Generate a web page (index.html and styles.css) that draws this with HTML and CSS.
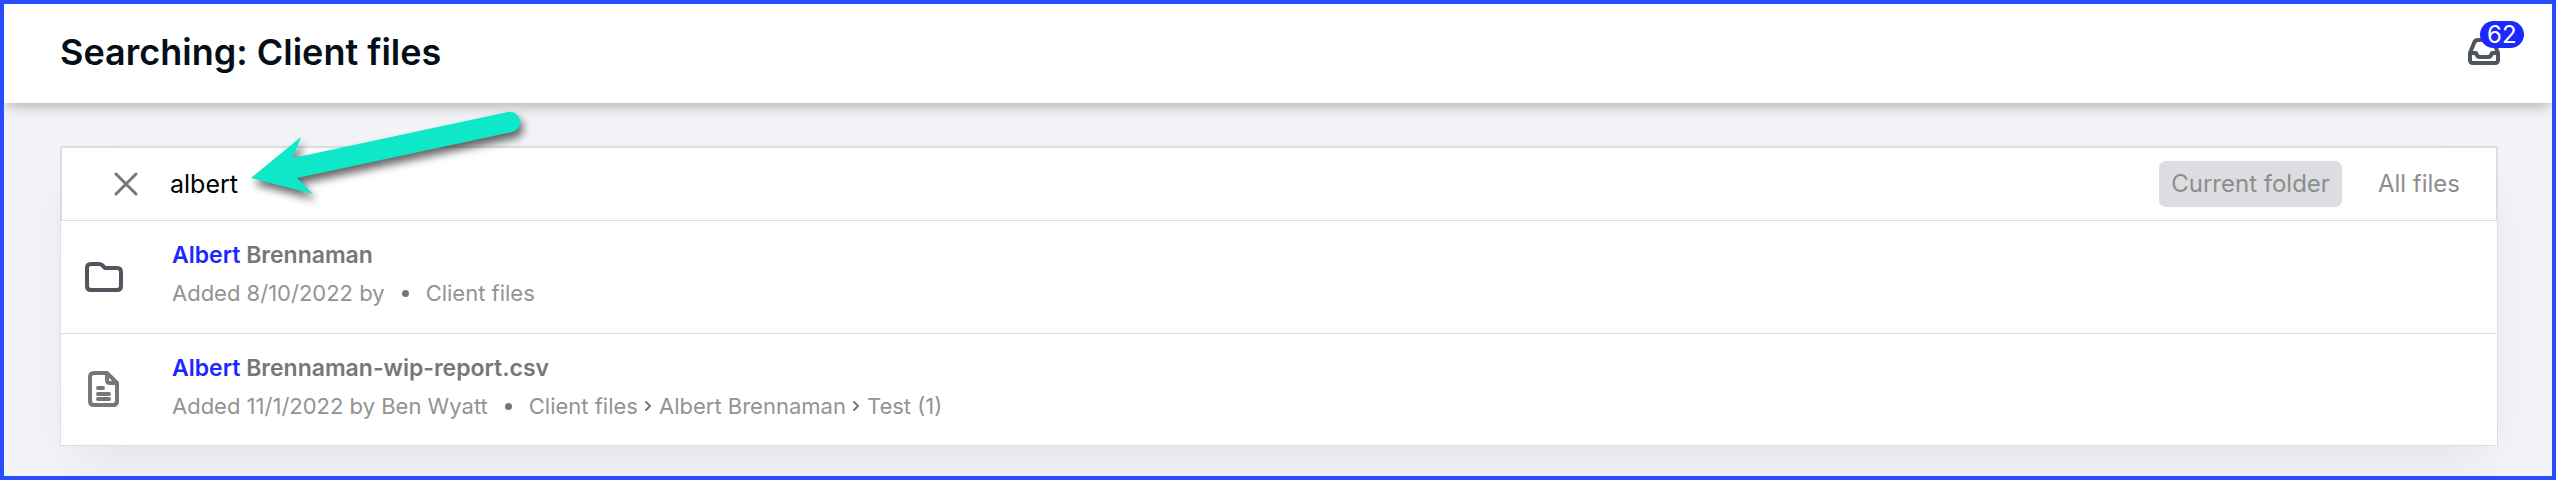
FILE: index.html
```
<!DOCTYPE html>
<html lang="en">
<head>
    <meta charset="UTF-8">
    <meta name="viewport" content="width=device-width, initial-scale=1.0">
    <title>Searching: Client files</title>
    <link rel="stylesheet" href="styles.css">
</head>
<body>
    <header class="header">
        <h1>Searching: Client files</h1>
        <button class="inbox" type="button" aria-label="Inbox, 62 unread">
            <svg width="34" height="28" viewBox="0 0 34 28">
                <path d="M3 15 L7 5 Q8 2 11 2 H23 Q26 2 27 5 L31 15 V22 Q31 25 28 25 H6 Q3 25 3 22 Z M3 15 H9 Q10 19 13 19 H21 Q24 19 25 15 H31"></path>
            </svg>
            <span class="badge">62</span>
        </button>
    </header>

    <main class="content">
        <div class="card">
            <form class="search">
                <button class="clear" type="button" aria-label="Clear search">
                    <svg width="24" height="24" viewBox="0 0 24 24">
                        <path d="M2 2 L22 22 M22 2 L2 22"></path>
                    </svg>
                </button>
                <input class="query" type="text" value="albert" aria-label="Search files">
                <button class="scope active" type="button">Current folder</button>
                <button class="scope" type="button">All files</button>
            </form>

            <ul class="results">
                <li class="row">
                    <svg class="icon folder" width="38" height="32" viewBox="0 0 38 32">
                        <path d="M6 3 H14 Q16 3 17 4 L20 7 H32 Q36 7 36 11 V25 Q36 29 32 29 H6 Q2 29 2 25 V7 Q2 3 6 3 Z"></path>
                    </svg>
                    <div class="info">
                        <a class="name" href="#"><mark>Albert</mark> Brennaman</a>
                        <div class="meta">
                            <span>Added 8/10/2022 by</span>
                            <span class="dot"></span>
                            <a href="#">Client files</a>
                        </div>
                    </div>
                </li>
                <li class="row">
                    <svg class="icon file" width="38" height="38" viewBox="0 0 38 38">
                        <path d="M9 2 H22 L32 12 V30 Q32 34 28 34 H9 Q5 34 5 30 V6 Q5 2 9 2 Z M22 2 V9 Q22 12 25 12 H32"></path>
                        <path class="lines" d="M13 17 H18 M13 23 H24 M13 28 H24"></path>
                    </svg>
                    <div class="info">
                        <a class="name" href="#"><mark>Albert</mark> Brennaman-wip-report.csv</a>
                        <div class="meta">
                            <span>Added 11/1/2022 by Ben Wyatt</span>
                            <span class="dot"></span>
                            <a href="#">Client files</a>
                            <svg class="chevron" width="7" height="12" viewBox="0 0 7 12"><path d="M1 2 L5 6 L1 10"></path></svg>
                            <a href="#">Albert Brennaman</a>
                            <svg class="chevron" width="7" height="12" viewBox="0 0 7 12"><path d="M1 2 L5 6 L1 10"></path></svg>
                            <a href="#">Test (1)</a>
                        </div>
                    </div>
                </li>
            </ul>
        </div>
    </main>

    <!-- arrow pointing at the search text -->
    <svg class="arrow" width="290" height="110" viewBox="240 100 290 110">
        <path d="M251 178 L301 137 L293 158 L508 112 A10 10 0 0 1 512 132 L297 178 L313 194 Z"></path>
    </svg>
</body>
</html>
```
FILE: styles.css
```
*{
    margin: 0;
    padding: 0;
    box-sizing: border-box;
    font-family: Inter, Arial, sans-serif;
}

body{
    position: relative;
    display: flex;
    flex-direction: column;
    min-height: 100vh;
    border: 4px solid #294cff;
    background-color: #f3f4f8;
    overflow: hidden;
}

button{
    border: none;
    background: none;
    cursor: pointer;
}

a{
    color: inherit;
    text-decoration: none;
}

svg{
    display: block;
    flex-shrink: 0;
}

svg path{
    fill: none;
    stroke: #777777;
    stroke-width: 4;
    stroke-linecap: round;
    stroke-linejoin: round;
}

/* header */
.header{
    position: relative;
    z-index: 1;
    display: flex;
    justify-content: space-between;
    align-items: center;
    padding: 24px 51px 27px 56px;
    background-color: #fff;
    box-shadow: 0 4px 14px -2px rgba(0, 0, 0, 0.32);
}

.header h1{
    font-size: 36px;
    line-height: 48px;
    font-weight: 600;
    color: #050f19;
}

.inbox{
    position: relative;
}

.inbox svg path{
    stroke: #50555e;
}

.badge{
    position: absolute;
    left: 13px;
    bottom: 18px;
    padding: 0 7px;
    border-radius: 14px;
    background-color: #1d27ff;
    color: #fff;
    font-size: 24px;
    line-height: 27px;
}

/* search results */
.content{
    flex: 1;
    padding: 43px 54px 0 56px;
}

.card{
    border: 1px solid #dcdde0;
    background-color: #fff;
    box-shadow: 0 24px 60px -16px rgba(0, 0, 0, 0.09);
}

.search{
    display: flex;
    align-items: center;
    gap: 24px;
    padding: 12px 24px 12px 52px;
    border: 1px solid #dcdde0;
}

.clear{
    width: 24px;
}

.clear svg path{
    stroke-width: 3;
}

.query{
    flex: 1;
    height: 48px;
    margin-left: 8px;
    border: none;
    outline: none;
    font-size: 25px;
    color: #000;
}

.scope{
    padding: 0 12px;
    border-radius: 7px;
    font-size: 24px;
    line-height: 46px;
    color: #8d8d8d;
}

.scope.active{
    background-color: #dcdde0;
}

.results{
    list-style: none;
}

.row{
    display: flex;
    align-items: center;
    gap: 49px;
    padding-left: 24px;
}

.row + .row{
    border-top: 1px solid #dcdde0;
}

.folder path{
    stroke: #50555e;
}

.info{
    padding: 14px 0 22px;
}

.row + .row .info{
    padding-bottom: 21px;
}

.name{
    display: block;
    font-size: 23px;
    line-height: 40px;
    font-weight: 600;
    color: #777777;
}

.name mark{
    background: none;
    color: #1d27ff;
}

.meta{
    display: flex;
    align-items: center;
    font-size: 22px;
    line-height: 36px;
    color: #939393;
}

.dot{
    width: 7px;
    height: 7px;
    margin: 0 17px;
    border-radius: 50%;
    background-color: #777777;
}

.chevron{
    margin: 0 7px;
}

.chevron path{
    stroke-width: 2;
}

.arrow{
    position: absolute;
    z-index: 2;
    left: 236px;
    top: 96px;
    filter: drop-shadow(3px 6px 4px rgba(0, 0, 0, 0.6));
    pointer-events: none;
}

.arrow path{
    fill: #0ee8c8;
    stroke: none;
}
```
